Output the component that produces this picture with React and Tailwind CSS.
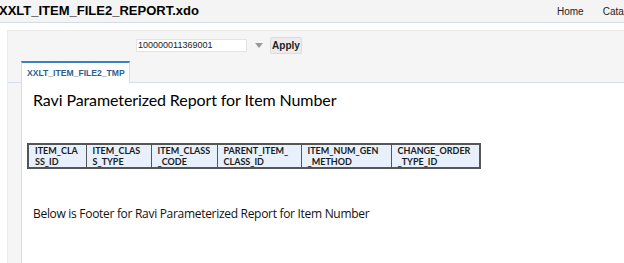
import React from 'react';

const columns = [
  { label: ['ITEM_CLA', 'SS_ID'], w: 'w-[58px]' },
  { label: ['ITEM_CLAS', 'S_TYPE'], w: 'w-[65px]' },
  { label: ['ITEM_CLASS', '_CODE'], w: 'w-[66px]' },
  { label: ['PARENT_ITEM_', 'CLASS_ID'], w: 'w-[84px]' },
  { label: ['ITEM_NUM_GEN', '_METHOD'], w: 'w-[90px]' },
  { label: ['CHANGE_ORDER', '_TYPE_ID'], w: 'w-[89px]' },
];

const App = () => {
  return (
    <div className="w-[624px] h-[263px] overflow-hidden bg-white font-['Liberation_Sans',Arial,sans-serif]">
      {/* Top header */}
      <div className="h-[23px] bg-[#f4f4f4] border-b border-[#d5dbe2] flex items-center overflow-hidden">
        <div className="w-[558px] shrink-0 text-[13px] font-bold text-black -ml-[1px] whitespace-nowrap">XXLT_ITEM_FILE2_REPORT.xdo</div>
        <div className="flex items-center gap-[19px] text-[10px] text-[#222] whitespace-nowrap shrink-0">
          <span>Home</span>
          <span>Catalog</span>
        </div>
      </div>

      {/* Report panel */}
      <div className="mt-[7px] ml-[7px] bg-[#f5f5f5] border-l border-t border-[#ececec] h-[233px] flex flex-col">
        {/* Parameters */}
        <div className="h-[29px] flex items-center pl-[128px]">
          <div className="w-[111px] h-[13px] bg-white border border-[#e3e3e3] text-[9px] leading-[11px] pl-[1px] text-[#222]">100000011369001</div>
          <div className="ml-[8px] w-0 h-0 border-l-[4px] border-r-[4px] border-t-[5px] border-l-transparent border-r-transparent border-t-[#9a9a9a]" />
          <button className="ml-[7px] h-[17px] w-[32px] border border-[#dcdcdc] bg-[#ececec] rounded-[2px] text-[10px] font-bold text-[#222]">Apply</button>
        </div>

        {/* Tabs */}
        <div className="h-[23px] flex items-end border-b border-[#d5dde6]">
          <div className="ml-[13px] w-[109px] h-[22px] bg-white border-t-2 border-[#3b7fc4] border-x border-x-[#d5dde6] -mb-[1px] flex items-center pl-[5px] text-[8.6px] font-bold text-[#2e5f8f] whitespace-nowrap">
            XXLT_ITEM_FILE2_TMP
          </div>
        </div>

        {/* Content */}
        <div className="flex-1 ml-[13px] bg-white border-l border-[#dcdcdc] pl-[11px]">
          <h1 className="mt-[6px] text-[16px] text-black font-['Lato',sans-serif] leading-[22px] tracking-[-0.1px]">
            Ravi Parameterized Report for Item Number
          </h1>

          <table className="mt-[32px] -ml-[6px] table-fixed border-collapse border-2 border-[#555] font-['Lato',sans-serif]">
            <tbody>
              <tr>
                {columns.map((c, i) => (
                  <td key={i} className={`${c.w} border border-[#555] bg-[#e8f1fb] pl-[6px] pr-0 pt-0 pb-0 align-top text-[9px] font-bold leading-[11px] text-[#1a1a1a] whitespace-nowrap`}>
                    {c.label[0]}
                    <br />
                    {c.label[1]}
                  </td>
                ))}
              </tr>
            </tbody>
          </table>

          <p className="mt-[36px] text-[12px] text-[#111] font-['Open_Sans',sans-serif] tracking-[-0.3px]">
            Below is Footer for Ravi Parameterized Report for Item Number
          </p>
        </div>
      </div>
    </div>
  );
};

export default App;
